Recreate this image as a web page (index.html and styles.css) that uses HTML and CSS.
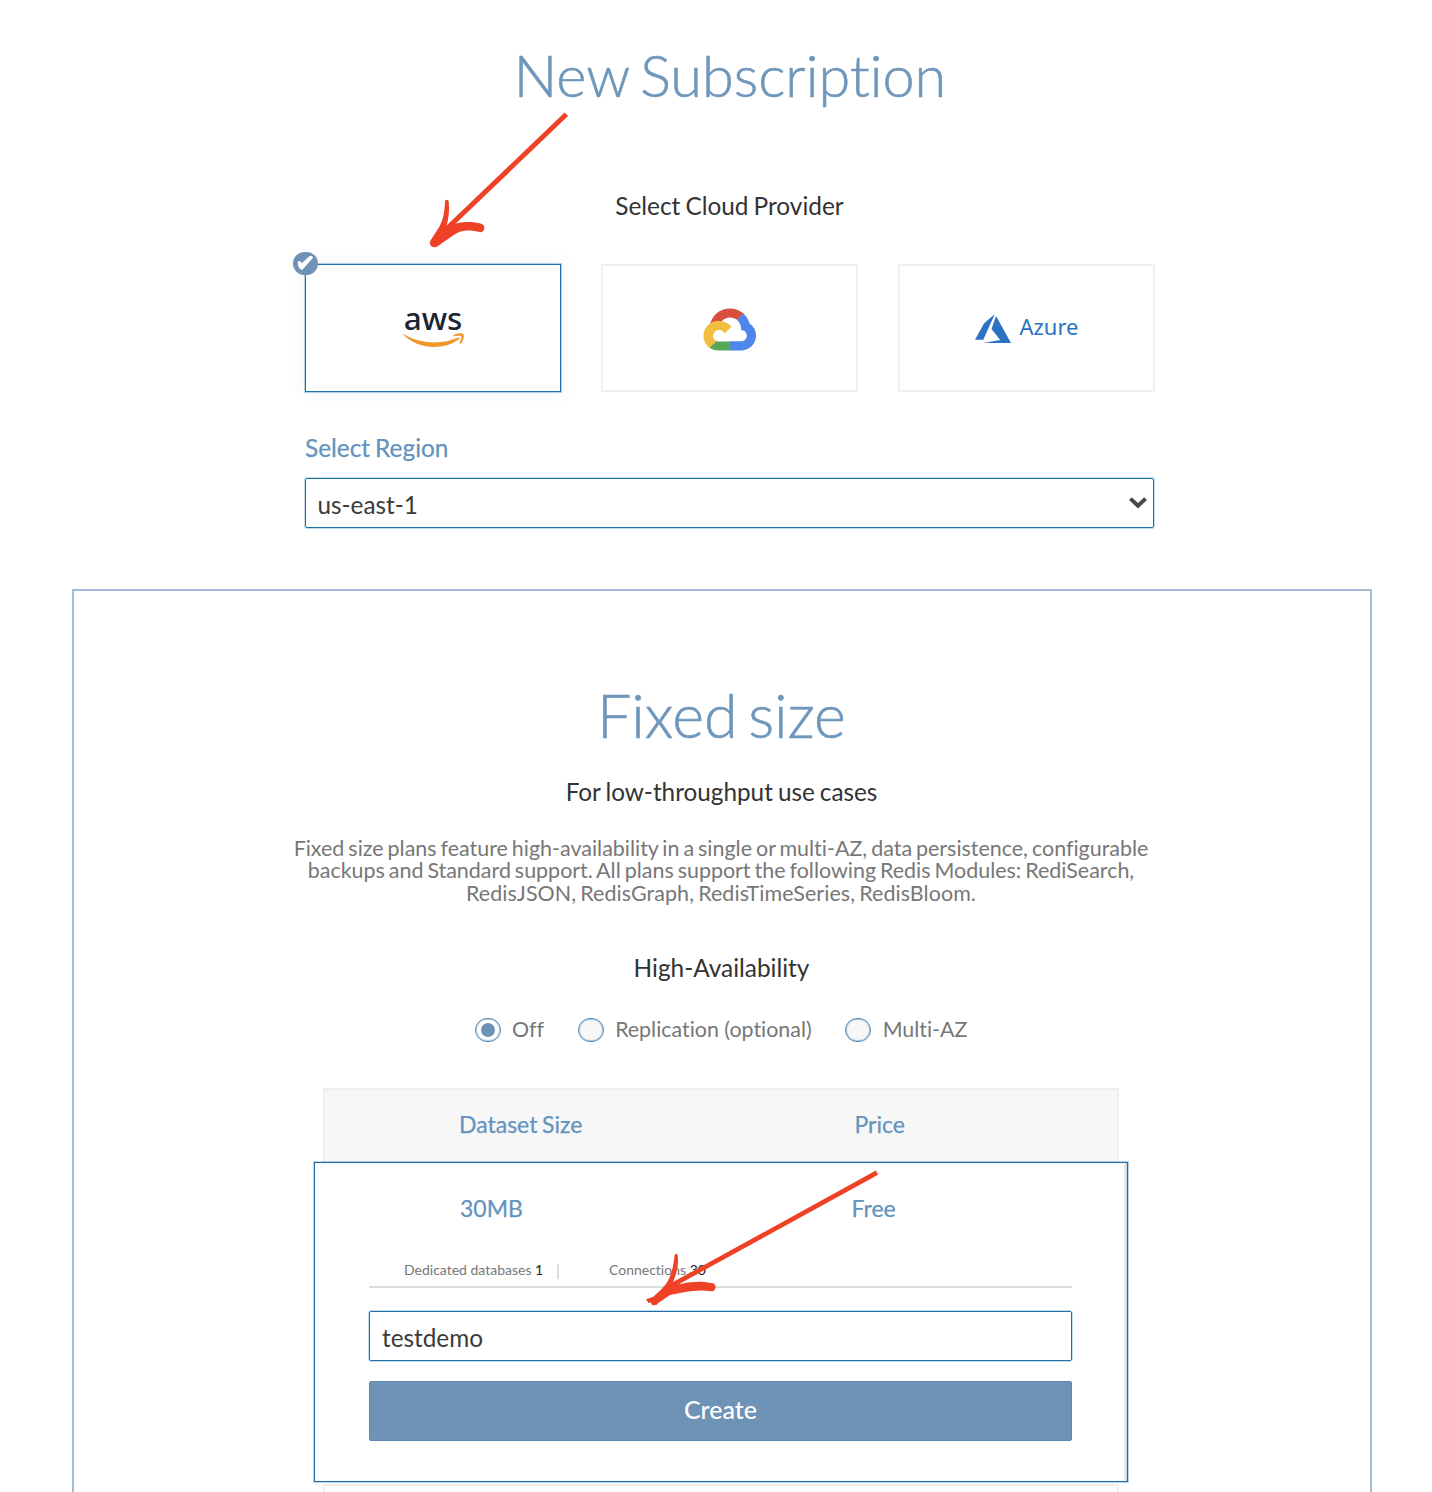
FILE: index.html
```html
<!DOCTYPE html>
<html lang="en">
<head>
<meta charset="utf-8">
<title>New Subscription</title>
<link rel="stylesheet" href="styles.css">
</head>
<body>
<main class="page">
  <section class="setup">
    <h1 class="title">New Subscription</h1>
    <h2 class="subtitle">Select Cloud Provider</h2>
    <div class="providers">
      <div class="provider provider-selected">
        <svg class="check" viewBox="0 0 75 69"><rect width="75" height="69" rx="35" fill="#6f93b7"/><path d="M14 32Q14 27 19 27Q24 27 26 34L49 13Q56 9 59 14Q61 18 57 21L30 51Q26 55 21 51Q14 43 14 32Z" fill="#fff"/></svg>
        <div class="aws">
          <span class="aws-name">aws</span>
          <svg class="aws-smile" viewBox="0 0 183 44" fill="#f0972a"><path d="M1 5Q0 2 4 4C55 34 118 34 166 13Q172 12 169 17C125 53 46 50 1 5Z"/><path d="M151 7C161-1 177-1 181 3C185 8 181 24 173 32Q169 34 170 29C173 21 177 12 174 9C170 6 161 8 153 9Q149 9 151 7Z"/></svg>
        </div>
      </div>
      <div class="provider">
        <svg class="gcp" viewBox="0 0 128 128">
          <path fill="#d94f3d" d="M80.6 40.3h.4l-.2-.2 14-14v-.3c-11.8-10.4-28.1-14-43.2-9.5C36.5 20.8 24.9 32.8 20.7 48c.2-.1.5-.2.8-.2 5.2-3.4 11.4-5.4 17.9-5.4 2.2 0 4.3.2 6.4.6.1-.1.2-.1.3-.1 9-9.9 24.2-11.1 34.6-2.6h-.1z"/>
          <path fill="#4f86ec" d="M108.1 47.8c-2.3-8.5-7.1-16.2-13.8-22.1L80 39.9c6 4.9 9.5 12.3 9.3 20v2.5c16.9 0 16.9 25.2 0 25.2H63.9v20h-.1l.1.2h25.4c14.6.1 27.5-9.3 31.8-23.1 4.3-13.8-1-28.8-13-36.9z"/>
          <path fill="#58a55c" d="M39 107.9h26.3V87.7H39c-1.9 0-3.7-.4-5.4-1.1l-15.2 14.6v.2c6 4.3 13.2 6.6 20.7 6.6z"/>
          <path fill="#f2be42" d="M40.2 41.9c-14.9.1-28.1 9.3-32.9 22.8-4.8 13.6 0 28.5 11.8 37.3l15.6-14.9c-8.6-3.7-10.6-14.5-4-20.8 6.6-6.4 17.8-4.4 21.7 3.8L68 55.2C61.4 46.9 51.1 42 40.2 42.1z"/>
        </svg>
      </div>
      <div class="provider azure">
        <svg class="azure-mark" viewBox="0 2.7 24 18.6" preserveAspectRatio="none" fill="#2b72c2"><path d="M5.483 21.3H24L14.025 4.013l-3.038 8.347 5.836 6.938L5.483 21.3zM13.23 2.7L6.105 8.677 0 19.253h5.505v.014L13.23 2.7z"/></svg>
        <span class="azure-name">Azure</span>
      </div>
    </div>
    <div class="region-label">Select Region</div>
    <div class="field region">
      <span>us-east-1</span>
      <svg class="chevron" viewBox="0 0 18 12"><path d="M1.4 1.6 9 8.8 16.6 1.6" fill="none" stroke="#4a4a4a" stroke-width="4"/></svg>
    </div>
  </section>

  <section class="panel">
    <h2 class="title plan-title">Fixed size</h2>
    <h3 class="subtitle plan-subtitle">For low-throughput use cases</h3>
    <p class="description">Fixed size plans feature high-availability in a single or multi-AZ, data persistence, configurable<br>backups and Standard support. All plans support the following Redis Modules: RediSearch,<br><span class="modules">RedisJSON, RedisGraph, RedisTimeSeries, RedisBloom.</span></p>
    <h3 class="subtitle availability">High-Availability</h3>
    <div class="options">
      <div class="option"><span class="radio radio-on"></span><span class="option-label">Off</span></div>
      <div class="option"><span class="radio"></span><span class="option-label">Replication (optional)</span></div>
      <div class="option"><span class="radio"></span><span class="option-label">Multi-AZ</span></div>
    </div>
    <div class="plans">
      <div class="plans-head"><span>Dataset Size</span><span>Price</span></div>
      <div class="plan">
        <div class="plan-row"><span>30MB</span><span>Free</span></div>
        <div class="meta">
          <span class="meta-item">Dedicated databases <b>1</b></span>
          <span class="meta-item">Connections <b>30</b></span>
        </div>
        <div class="field plan-name">testdemo</div>
        <div class="create">Create</div>
      </div>
      <div class="next-plan"></div>
    </div>
  </section>

  <svg class="arrows" viewBox="0 0 1432 1492" fill="#ee4126" stroke="none">
    <g transform="translate(280 100.3) scale(.33333)">
      <path d="M859 42 505 381" stroke="#ee4126" stroke-width="15"/>
      <path d="M495 302Q500 294 506 302C509 330 506 352 500 376L523 371C550 363 580 364 604 370Q614 374 613 384Q611 395 602 396C560 384 535 393 520 405L475 436Q464 445 454 438Q446 430 452 420L478 379C492 353 494 328 495 302Z"/>
    </g>
    <g transform="translate(600 1150) scale(.33333)">
      <path d="M831 68 210 409" stroke="#ee4126" stroke-width="14"/>
      <path d="M224 315Q228 308 233 315C237 345 229 374 216 404L246 401C278 394 309 393 340 400Q348 405 347 413Q343 425 334 424C292 416 248 427 210 435L176 458L169 465L157 466L151 457L146 460L138 448L160 440L183 419C213 391 220 352 224 315Z"/>
    </g>
  </svg>
</main>
</body>
</html>
```
FILE: styles.css
```css
* { box-sizing: border-box; }

body {
  margin: 0;
  background: #fff;
  font-family: Lato, "Liberation Sans", sans-serif;
  font-variant-ligatures: none;
  color: #3a3a3a;
}

h1, h2, h3, p { margin: 0; font-weight: 400; }

.page {
  position: relative;
  width: 1432px;
  height: 1492px;
  overflow: hidden;
  padding-top: 40px;
}

.setup {
  width: 850px;
  margin-left: 305px;
}

.title {
  font-size: 57.6px;
  line-height: 70px;
  font-weight: 300;
  word-spacing: -4.5px;
  color: #6f97bb;
  -webkit-text-stroke: .6px #6f97bb;
  text-align: center;
}

.subtitle {
  font-size: 24.4px;
  line-height: 30px;
  word-spacing: -1.2px;
  text-align: center;
  color: #333;
}

.setup .subtitle { margin-top: 81px; margin-right: 1px; }

.providers {
  display: grid;
  grid-template-columns: 256px 257px 257px;
  justify-content: space-between;
  margin-top: 43px;
}

.provider {
  position: relative;
  display: flex;
  align-items: center;
  justify-content: center;
  height: 128px;
  border: 2px solid #efefef;
}

.provider-selected {
  border: 1px solid #1d6fa8;
  box-shadow: 0 0 0 1px rgba(29, 111, 168, .3), 0 0 20px rgba(0, 0, 0, .06);
}

.check {
  position: absolute;
  left: -13px;
  top: -13px;
  width: 25px;
  height: 23px;
}

.aws {
  display: flex;
  flex-direction: column;
  align-items: center;
  margin-bottom: 6px;
}

.aws-name {
  font: 500 31.5px/32px "Noto Sans", sans-serif;
  color: #1c2433;
}

.aws-smile {
  width: 61px;
  height: 15px;
  margin-top: -1px;
}

.gcp { width: 57.5px; height: 57.5px; margin-top: 5px; }

.azure { gap: 8px; padding-left: 1px; }
.azure-mark { width: 36px; height: 29px; }

.azure-name {
  font: 400 22px/30px "Noto Sans", sans-serif;
  color: #2b72c2;
  margin-bottom: 4px;
}

.region-label {
  margin-top: 41px;
  font-size: 24.4px;
  line-height: 30px;
  word-spacing: -1.2px;
  color: #6493bd;
  -webkit-text-stroke: .25px #6493bd;
}

.field {
  height: 50px;
  border: 1px solid #1d6fa8;
  border-radius: 2px;
  box-shadow: 0 0 0 1px rgba(29, 111, 168, .25);
  font-size: 24.3px;
  line-height: 48px;
  color: #3a3a3a;
}

.region {
  display: flex;
  align-items: center;
  justify-content: space-between;
  width: 849px;
  margin-top: 15px;
  padding: 0 6px 0 11.5px;
}

.region span { padding-top: 3px; }

.chevron { width: 18px; height: 12px; }

.panel {
  width: 1300px;
  height: 920px;
  margin: 61px 0 0 72px;
  border: 2px solid #a3bbd9;
  padding-top: 94px;
}

.plan-title { font-size: 61px; line-height: 60px; word-spacing: -6px; margin-right: 1px; }
.plan-subtitle { margin-top: 32px; margin-right: 1px; font-size: 24.3px; }

.description {
  margin: 29.5px 2px 0 0;
  font-size: 21.45px;
  line-height: 22.9px;
  word-spacing: -1.5px;
  color: #777;
  text-align: center;
}

.modules { letter-spacing: .08px; }

.availability { margin: 47.5px 1px 0 0; }

.options {
  display: flex;
  justify-content: center;
  gap: 33.5px;
  margin-top: 34.8px;
  margin-right: 2px;
}

.option { display: flex; gap: 11.5px; height: 24px; }

.option-label {
  font-size: 21.4px;
  line-height: 22px;
  color: #777;
}

.radio {
  width: 26px;
  height: 24px;
  border: 1.5px solid #4d87b6;
  outline: 1px solid rgba(77, 135, 182, .4);
  outline-offset: -2px;
  border-radius: 12px;
  background: #f7f7f7;
}

.radio-on {
  display: flex;
  align-items: center;
  justify-content: center;
  background: #fff;
}

.radio-on::after {
  content: "";
  width: 14px;
  height: 14px;
  border-radius: 50%;
  background: #6f93b7;
}

.plans {
  width: 796px;
  margin: 46px 0 0 249px;
}

.plans-head, .plan-row {
  display: grid;
  font-size: 23px;
  line-height: 30px;
  word-spacing: -1.2px;
  color: #6493bd;
  -webkit-text-stroke: .25px #6493bd;
}

.plans-head {
  grid-template-columns: 395.5px 1fr;
  height: 74px;
  padding: 19px 0 0 134px;
  border: 2px solid #efefef;
  border-bottom: 0;
  background: #f7f7f7;
}

.plan {
  position: relative;
  width: 814px;
  height: 320px;
  margin-left: -9px;
  padding: 30px 55px 0 54px;
  background: #fff;
  border: 1px solid #1d6fa8;
  box-shadow: 0 0 0 1px rgba(29, 111, 168, .3), inset -3px 0 3px -1px rgba(0, 0, 0, .18);
}

.plan-row {
  grid-template-columns: 391.5px 1fr;
  padding-left: 91px;
}

.meta {
  display: flex;
  height: 28px;
  margin-top: 37px;
  padding-left: 35px;
  border-bottom: 2px solid #ddd;
  font-size: 14px;
  line-height: 19px;
  color: #777;
}

.meta b { font-weight: 400; color: #222; }

.meta-item:first-child {
  width: 155px;
  height: 15px;
  margin: 4px 50px 0 0;
  border-right: 2px solid #ddd;
  line-height: 11px;
}

.plan-name {
  margin-top: 23px;
  padding: 2px 12px 0;
}

.create {
  height: 60px;
  margin-top: 20px;
  border: 1px solid #5a88b1;
  border-radius: 2px;
  background: #6f93b6;
  font-size: 25px;
  font-weight: 500;
  line-height: 55px;
  text-align: center;
  color: #fff;
}

.next-plan {
  height: 40px;
  margin-top: 2px;
  border: 2px solid #efefef;
}

.arrows {
  position: absolute;
  inset: 0;
  width: 1432px;
  height: 1492px;
  pointer-events: none;
}
```
